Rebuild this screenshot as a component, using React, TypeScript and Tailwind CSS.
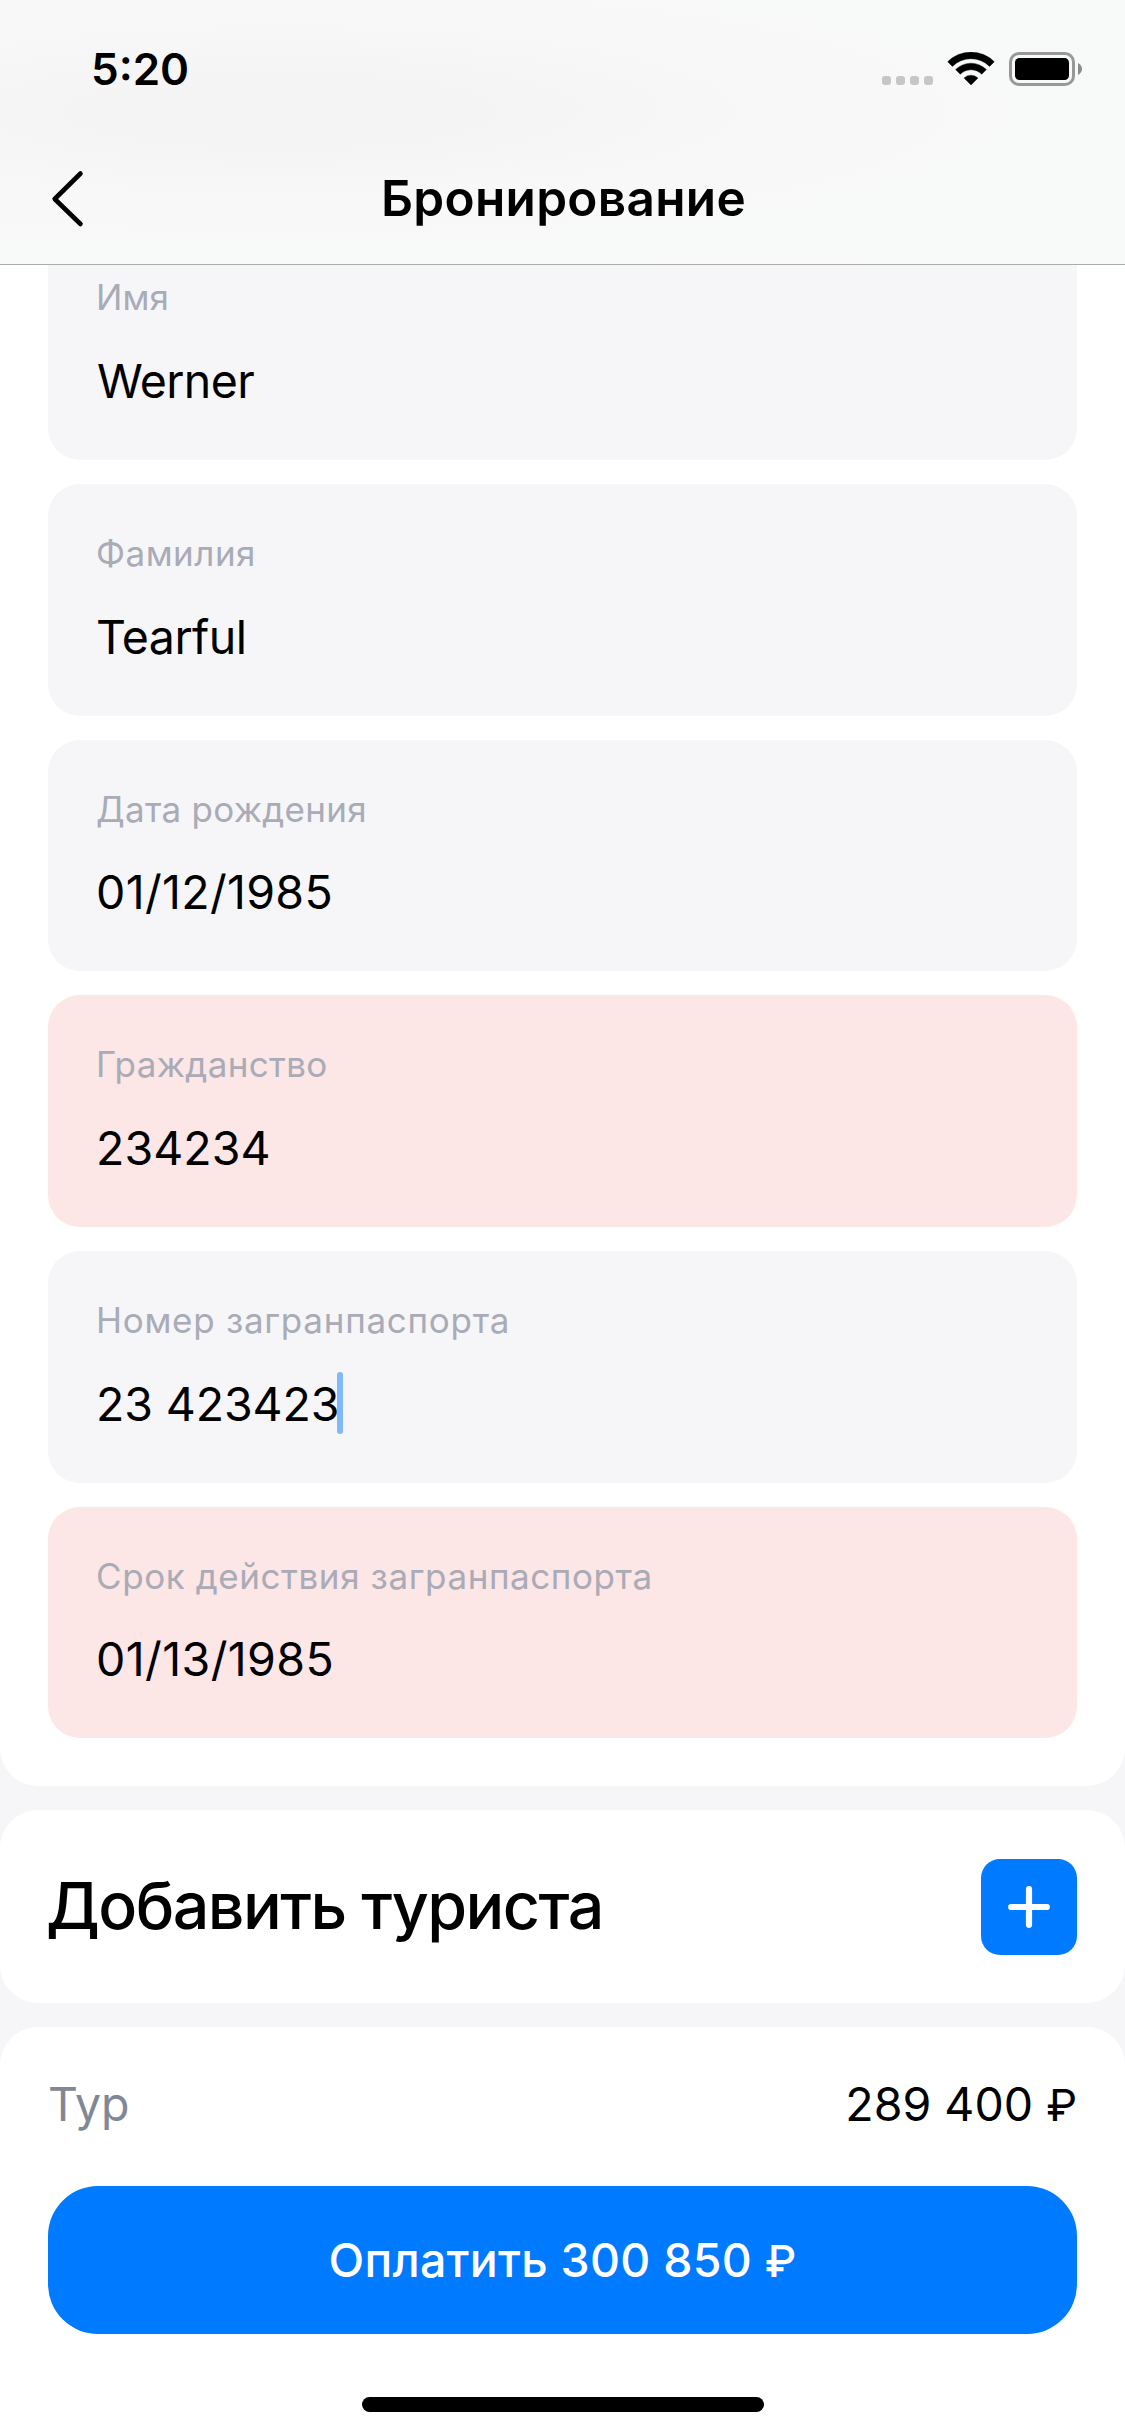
import React from "react";

type FieldProps = {
  label: string;
  value: string;
  labelClass: string;
  valueClass: string;
  invalid?: boolean;
  focused?: boolean;
};

const fields: FieldProps[] = [
  { label: "Имя", value: "Werner", labelClass: "tracking-[0.1px]", valueClass: "tracking-[-0.65px] ml-px" },
  { label: "Фамилия", value: "Tearful", labelClass: "tracking-[0.5px]", valueClass: "tracking-[-0.55px]" },
  { label: "Дата рождения", value: "01/12/1985", labelClass: "tracking-[0.28px]", valueClass: "tracking-[0.32px]" },
  { label: "Гражданство", value: "234234", labelClass: "tracking-[0.33px]", valueClass: "tracking-[0.05px]", invalid: true },
  { label: "Номер загранпаспорта", value: "23 423423", labelClass: "tracking-[0.72px]", valueClass: "tracking-[-0.12px]", focused: true },
  { label: "Срок действия загранпаспорта", value: "01/13/1985", labelClass: "tracking-[0.58px]", valueClass: "tracking-[0.4px]", invalid: true },
];

function Field({ label, value, labelClass, valueClass, invalid, focused }: FieldProps) {
  return (
    <div
      className={`h-[231.67px] shrink-0 rounded-[32px] px-12 pt-[51px] ${invalid ? "bg-[#fce6e6]" : "bg-[#f6f6f9]"}`}
    >
      <div className={`text-[35px] leading-[36px] whitespace-nowrap text-[#a9abb7] ${labelClass}`}>{label}</div>
      <div className="mt-[35.6px] flex h-[60px] items-center text-[46.5px] leading-[60px] whitespace-nowrap text-black">
        <span className={valueClass}>{value}</span>
        {focused && <span className="-ml-[2px] mt-[-2px] h-[62px] w-[6px] shrink-0 rounded-[3px] bg-[#7fb9fb]" />}
      </div>
    </div>
  );
}

function StatusIcons() {
  return (
    <svg width="200" height="34" viewBox="882 52 200 34" className="block">
      {[882, 896, 910, 924].map((x) => (
        <rect key={x} x={x} y="76" width="9" height="9" rx="3" fill="#c6c6c6" />
      ))}
      <path
        d="M947.7 61.7A33 33 0 0 1 994.3 61.7L989.6 66.4A26.3 26.3 0 0 0 952.4 66.4Z"
        stroke="#000"
        strokeWidth="0.4"
        strokeLinejoin="round"
      />
      <path d="M955.6 69.6A21.8 21.8 0 0 1 986.4 69.6L981.8 74.2A15.2 15.2 0 0 0 960.2 74.2Z" stroke="#000" strokeWidth="0.4" strokeLinejoin="round" />
      <path d="M964 78A10 10 0 0 1 978 78L971 85Z" stroke="#000" strokeWidth="0.4" strokeLinejoin="round" />
      <rect x="1010.5" y="53.5" width="63" height="31" rx="8.5" fill="none" stroke="#989898" strokeWidth="3" />
      <rect x="1015" y="58" width="54" height="22" rx="4.5" fill="#000" />
      <path d="M1078 63Q1082 65.5 1082 69Q1082 72.5 1078 75Z" fill="#8a8a8a" />
    </svg>
  );
}

function Header() {
  return (
    <header className="relative z-10 flex h-[265px] shrink-0 flex-col border-b border-[#ababab] bg-[#f7f8f8] bg-[radial-gradient(ellipse_at_25%_42%,#f3f3f3_0%,#f4f5f4_20%,#f7f8f7_42%,#f8faf9_85%)]">
      <div className="flex h-[138px] items-center justify-between pr-[43px] pl-[91px]">
        <span className="text-[44px] leading-[44px] font-semibold">5:20</span>
        <StatusIcons />
      </div>
      <div className="grid h-[119px] grid-cols-[122px_1fr_120px] items-center">
        <svg width="36" height="60" viewBox="0 0 36 60" className="ml-[50px] block" fill="none">
          <path d="M30.5 5.5L4.7 31L30.5 56" stroke="#000" strokeWidth="4.6" strokeLinecap="round" strokeLinejoin="round" />
        </svg>
        <h1 className="text-center text-[49.5px] leading-[60px] font-semibold tracking-[0.3px] whitespace-nowrap">
          Бронирование
        </h1>
      </div>
    </header>
  );
}

export default function App() {
  return (
    <div className="flex h-[2436px] w-[1125px] flex-col overflow-hidden bg-[#f6f6f9] font-['Inter',sans-serif] text-black">
      <Header />

      <section className="flex h-[1521px] shrink-0 flex-col rounded-b-[38px] bg-white px-12">
        <div className="-mt-[36.67px] flex flex-col gap-6">
          {fields.map((field) => (
            <Field key={field.label} {...field} />
          ))}
        </div>
      </section>

      <section className="mt-6 flex h-[193px] shrink-0 items-center justify-between rounded-[38px] bg-white pr-12 pl-[46px]">
        <h2 className="-mt-px text-[64.5px] leading-[80px] font-medium tracking-[-1.55px] whitespace-nowrap">Добавить туриста</h2>
        <button className="flex size-24 items-center justify-center rounded-[19px] bg-[#007aff]" aria-label="Добавить туриста">
          <svg width="42" height="42" viewBox="0 0 42 42" className="block">
            <path d="M21 3.2V38.8M3.2 21H38.8" stroke="#fff" strokeWidth="6.2" strokeLinecap="round" />
          </svg>
        </button>
      </section>

      <section className="mt-6 flex grow flex-col rounded-t-[38px] bg-white px-12 pt-[47px]">
        <div className="flex h-[60px] items-center justify-between text-[46.5px] leading-[60px] whitespace-nowrap">
          <span className="tracking-[-0.12px] text-[#828796]">Тур</span>
          <span>
            289 400 <span className="text-[44px]">₽</span>
          </span>
        </div>
        <button className="mt-[52px] flex h-[148px] items-center justify-center rounded-[50px] bg-[#007aff] text-[46.5px] leading-[60px] font-medium tracking-[0.26px] whitespace-pre text-white">
          <span>
            Оплатить 300 850 <span className="text-[44px]">₽</span>
          </span>
        </button>
        <div className="mt-[63px] h-[15px] w-[402px] self-center rounded-full bg-black" />
      </section>
    </div>
  );
}
